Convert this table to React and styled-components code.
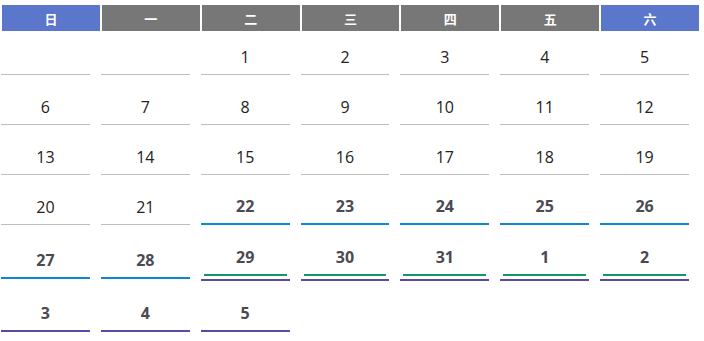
import React from "react"
import styled, { createGlobalStyle } from "styled-components"

const GlobalStyle = createGlobalStyle`
  body {
    margin: 0;
    background: #ffffff;
    font-family: "Open Sans", "Noto Sans", sans-serif;
  }
`

const COLORS = {
  weekday: "#777777",
  weekend: "#5b77cb",
  line: "#bdbdbd",
  blue: "#0b88d0",
  green: "#0f986b",
  purple: "#5b4aa3",
}

const Calendar = styled.div`
  width: 704px;
  box-sizing: border-box;
  padding: 5px 5px 0 2px;
`

const HeaderRow = styled.div`
  display: grid;
  grid-template-columns: repeat(7, 1fr);
  column-gap: 2px;
`

const HeadCell = styled.div`
  height: 26px;
  display: flex;
  align-items: center;
  justify-content: center;
  background: ${(p) => (p.$weekend ? COLORS.weekend : COLORS.weekday)};
  color: #ffffff;
  font-family: "Noto Sans CJK SC", "Noto Sans", sans-serif;
  font-weight: 700;
  font-size: 13px;
`

const Body = styled.div`
  display: grid;
  grid-template-columns: repeat(7, 1fr);
  column-gap: 2px;
  row-gap: 14px;
  align-items: center;
  margin: 8px 1px 0 -1px;
`

const Cell = styled.div`
  padding-right: 9px;
`

const DayBox = styled.div`
  height: 36px;
  box-sizing: border-box;
  display: flex;
  align-items: center;
  justify-content: center;
  font-size: 16px;
  color: ${(p) => (p.$event ? "#4a4a52" : "#222222")};
  font-weight: ${(p) => (p.$event ? 700 : 400)};
  border-bottom: ${(p) => (p.$event ? `2px solid ${p.$event}` : `1px solid ${COLORS.line}`)};
  margin: ${(p) => (p.$inset ? "0 3px" : "0")};
`

const Stack = styled.div`
  margin: 1px 0;
  padding-bottom: 3px;
  border-bottom: 2px solid ${(p) => p.$color};
`

const heads = ["日", "一", "二", "三", "四", "五", "六"]

const days = [
  null, null,
  ...[1, 2, 3, 4, 5, 6, 7, 8, 9, 10, 11, 12, 13, 14, 15, 16, 17, 18, 19, 20, 21].map((d) => ({ d })),
  ...[22, 23, 24, 25, 26, 27, 28].map((d) => ({ d, events: [COLORS.blue] })),
  ...[29, 30, 31, 1, 2].map((d) => ({ d, events: [COLORS.green, COLORS.purple] })),
  ...[3, 4, 5].map((d) => ({ d, events: [COLORS.purple] })),
]

const Day = ({ day }) => {
  if (!day) return <DayBox />
  const { d, events = [] } = day
  if (events.length === 2) {
    return (
      <Stack $color={events[1]}>
        <DayBox $event={events[0]} $inset>{d}</DayBox>
      </Stack>
    )
  }
  return <DayBox $event={events[0]}>{d}</DayBox>
}

const App = () => (
  <>
    <GlobalStyle />
    <Calendar>
      <HeaderRow>
        {heads.map((h, i) => (
          <HeadCell key={h} $weekend={i === 0 || i === 6}>
            {h}
          </HeadCell>
        ))}
      </HeaderRow>
      <Body>
        {days.map((day, i) => (
          <Cell key={i}>
            <Day day={day} />
          </Cell>
        ))}
      </Body>
    </Calendar>
  </>
)

export default App
